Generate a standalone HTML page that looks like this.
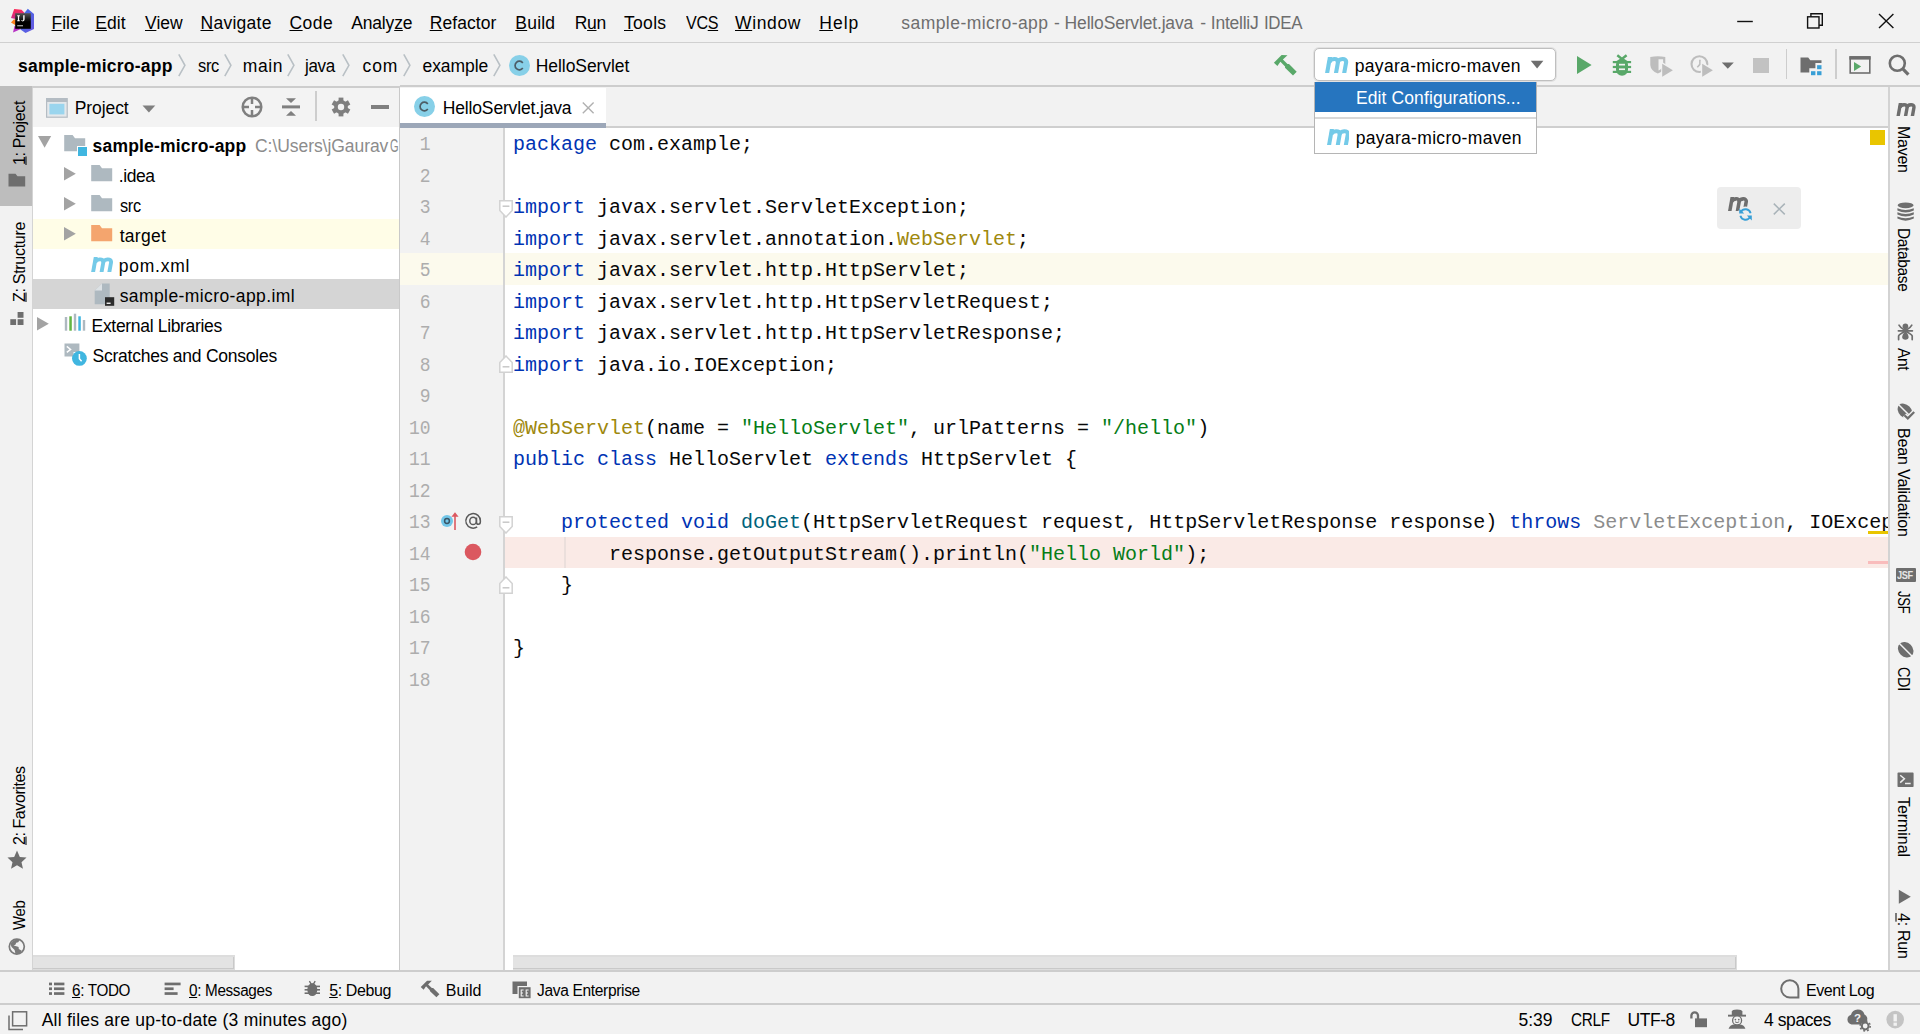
<!DOCTYPE html>
<html><head><meta charset="utf-8"><title>IntelliJ IDEA</title>
<style>
html,body{margin:0;padding:0;background:#f2f2f2;}
body{width:1920px;height:1034px;position:relative;overflow:hidden;background:#f2f2f2;font-family:"Liberation Sans",sans-serif;font-size:17.5px;color:#000;}
div,span,svg{position:absolute;}
span{white-space:pre;}
u{text-decoration:underline;text-underline-offset:1px;text-decoration-thickness:1px;}
.code span{position:static;}
.code div{left:0;height:32px;line-height:32px;white-space:pre;}
</style></head><body>
<div style="left:0px;top:0px;width:1920px;height:43px;background:#f2f2f2;"></div>
<div style="left:0px;top:42px;width:1920px;height:1px;background:#d0d0d0;"></div>
<span style="left:51.50px;top:10.80px;font-size:17.5px;line-height:24px;color:#000;letter-spacing:0.011px;"><u>F</u>ile</span>
<span style="left:95.20px;top:10.80px;font-size:17.5px;line-height:24px;color:#000;letter-spacing:0.102px;"><u>E</u>dit</span>
<span style="left:145.00px;top:10.80px;font-size:17.5px;line-height:24px;color:#000;letter-spacing:0.008px;"><u>V</u>iew</span>
<span style="left:200.50px;top:10.80px;font-size:17.5px;line-height:24px;color:#000;letter-spacing:0.266px;"><u>N</u>avigate</span>
<span style="left:289.50px;top:10.80px;font-size:17.5px;line-height:24px;color:#000;letter-spacing:0.466px;"><u>C</u>ode</span>
<span style="left:351.20px;top:10.80px;font-size:17.5px;line-height:24px;color:#000;letter-spacing:-0.154px;">Analy<u>z</u>e</span>
<span style="left:429.70px;top:10.80px;font-size:17.5px;line-height:24px;color:#000;letter-spacing:0.070px;"><u>R</u>efactor</span>
<span style="left:515.30px;top:10.80px;font-size:17.5px;line-height:24px;color:#000;letter-spacing:0.205px;"><u>B</u>uild</span>
<span style="left:574.80px;top:10.80px;font-size:17.5px;line-height:24px;color:#000;letter-spacing:-0.335px;">R<u>u</u>n</span>
<span style="left:624.00px;top:10.80px;font-size:17.5px;line-height:24px;color:#000;letter-spacing:0.299px;"><u>T</u>ools</span>
<span style="left:686.20px;top:10.80px;font-size:17.5px;line-height:24px;color:#000;letter-spacing:-0.350px;transform-origin:0 0;transform:scaleX(0.9188);">VC<u>S</u></span>
<span style="left:735.00px;top:10.80px;font-size:17.5px;line-height:24px;color:#000;letter-spacing:0.639px;"><u>W</u>indow</span>
<span style="left:819.30px;top:10.80px;font-size:17.5px;line-height:24px;color:#000;letter-spacing:0.980px;"><u>H</u>elp</span>
<span style="left:901.30px;top:10.80px;font-size:17.5px;line-height:24px;color:#6e6e6e;letter-spacing:0.446px;">sample-micro-app</span>
<span style="left:1054.00px;top:10.80px;font-size:17.5px;line-height:24px;color:#6e6e6e;letter-spacing:0.000px;">-</span>
<span style="left:1064.60px;top:10.80px;font-size:17.5px;line-height:24px;color:#6e6e6e;letter-spacing:-0.167px;">HelloServlet.java</span>
<span style="left:1200.30px;top:10.80px;font-size:17.5px;line-height:24px;color:#6e6e6e;letter-spacing:0.000px;">-</span>
<span style="left:1210.80px;top:10.80px;font-size:17.5px;line-height:24px;color:#6e6e6e;letter-spacing:-0.236px;">IntelliJ</span>
<span style="left:1264.03px;top:10.80px;font-size:17.5px;line-height:24px;color:#6e6e6e;letter-spacing:-0.350px;transform-origin:0 0;transform:scaleX(0.9662);">IDEA</span>
<svg style="left:1730px;top:8px;" width="180" height="28" viewBox="0 0 180 28"><g fill="none" stroke="#111" stroke-width="1.4"><path d="M7.2 13.5H22.8"/><rect x="77.6" y="8.8" width="11.4" height="11.2"/><path d="M80.9 8.8V5.8H92.3V17.2H89"/><path d="M149 6L163.4 20M163.4 6L149 20"/></g></svg>
<svg style="left:10px;top:8px;" width="26" height="26" viewBox="0 0 26 26"><defs><linearGradient id="lg1" x1="0" y1="0" x2="0" y2="1"><stop offset="0" stop-color="#fe2857"/><stop offset="1" stop-color="#c92d8c"/></linearGradient>
<linearGradient id="lg2" x1="0" y1="0" x2="1" y2="1"><stop offset="0" stop-color="#3a6ee8"/><stop offset="1" stop-color="#6b57e0"/></linearGradient>
<linearGradient id="lg3" x1="0" y1="0" x2="0" y2="1"><stop offset="0" stop-color="#555"/><stop offset=".55" stop-color="#000"/></linearGradient></defs>
<path d="M4.2 1L11.5 1.8L15 5.5L5.5 11L1 10Z" fill="url(#lg1)"/>
<path d="M1 14.5L4 11.2L6 12L6 17.5Z" fill="#fc801d"/>
<path d="M4.5 18L3 24.5L11 21Z" fill="#b631c4"/>
<path d="M17.8 0.8L24 6V21L15.5 25L10.5 21.5L14 5.5Z" fill="url(#lg2)"/>
<rect x="5.2" y="5.2" width="15.6" height="15.6" fill="url(#lg3)"/>
<path d="M7.2 7.2H9.8V8.2H9.1V12.3H9.8V13.3H7.2V12.3H7.9V8.2H7.2Z M13.2 7.2H14.6V11.6Q14.6 13.4 12.8 13.4Q11.7 13.4 11.1 12.6L11.8 11.9Q12.2 12.4 12.7 12.4Q13.2 12.4 13.2 11.5Z" fill="#fff"/>
<rect x="7.2" y="17.2" width="5.8" height="1.1" fill="#bbb"/></svg>
<div style="left:0px;top:44px;width:1920px;height:42px;background:#f2f2f2;"></div>
<div style="left:0px;top:86px;width:399.5px;height:2px;background:#cdcdcd;"></div>
<div style="left:399.5px;top:85px;width:1520.5px;height:2px;background:#cdcdcd;"></div>
<span style="left:18.00px;top:54.00px;font-size:17.5px;line-height:24px;color:#000;letter-spacing:0.250px;font-weight:bold;">sample-micro-app</span>
<span style="left:197.50px;top:54.00px;font-size:17.5px;line-height:24px;color:#000;letter-spacing:-0.350px;transform-origin:0 0;transform:scaleX(0.9398);">src</span>
<span style="left:242.80px;top:54.00px;font-size:17.5px;line-height:24px;color:#000;letter-spacing:0.601px;">main</span>
<span style="left:305.47px;top:54.00px;font-size:17.5px;line-height:24px;color:#000;letter-spacing:-0.350px;transform-origin:0 0;transform:scaleX(0.9746);">java</span>
<span style="left:362.50px;top:54.00px;font-size:17.5px;line-height:24px;color:#000;letter-spacing:0.909px;">com</span>
<span style="left:422.50px;top:54.00px;font-size:17.5px;line-height:24px;color:#000;letter-spacing:-0.069px;">example</span>
<span style="left:535.80px;top:54.00px;font-size:17.5px;line-height:24px;color:#000;letter-spacing:-0.071px;">HelloServlet</span>
<svg style="left:177.8px;top:54px;" width="8" height="23" viewBox="0 0 8 23"><path d="M0.8 0.4L6.9 11.3L0.8 22.2" fill="none" stroke="#b9c0c5" stroke-width="1.6"/></svg>
<svg style="left:224.3px;top:54px;" width="8" height="23" viewBox="0 0 8 23"><path d="M0.8 0.4L6.9 11.3L0.8 22.2" fill="none" stroke="#b9c0c5" stroke-width="1.6"/></svg>
<svg style="left:287.3px;top:54px;" width="8" height="23" viewBox="0 0 8 23"><path d="M0.8 0.4L6.9 11.3L0.8 22.2" fill="none" stroke="#b9c0c5" stroke-width="1.6"/></svg>
<svg style="left:342.3px;top:54px;" width="8" height="23" viewBox="0 0 8 23"><path d="M0.8 0.4L6.9 11.3L0.8 22.2" fill="none" stroke="#b9c0c5" stroke-width="1.6"/></svg>
<svg style="left:403.3px;top:54px;" width="8" height="23" viewBox="0 0 8 23"><path d="M0.8 0.4L6.9 11.3L0.8 22.2" fill="none" stroke="#b9c0c5" stroke-width="1.6"/></svg>
<svg style="left:493.3px;top:54px;" width="8" height="23" viewBox="0 0 8 23"><path d="M0.8 0.4L6.9 11.3L0.8 22.2" fill="none" stroke="#b9c0c5" stroke-width="1.6"/></svg>
<svg style="left:508.5px;top:54.5px;" width="21.0" height="21.0" viewBox="0 0 21.0 21.0"><circle cx="10.5" cy="10.5" r="10.5" fill="#87d0e8"/><path d="M13.8 7.9A4.3 4.3 0 1 0 13.8 13.1" fill="none" stroke="#4c5d66" stroke-width="1.7"/></svg>
<svg style="left:1273px;top:53px;" width="26" height="24" viewBox="0 0 26 24"><path d="M0.9 9.7L8.6 2L14.5 2.2L9.9 6.6L14.5 11H16L23.7 18.7L20 22.4L12 14.7L12.1 13.6L7.4 8.8L4.4 13Z" fill="#59a869"/></svg>
<div style="left:1314px;top:48px;width:241.5px;height:32.5px;background:#fff;border:1px solid #bfbfbf;border-radius:5px;box-sizing:border-box;box-shadow:0 0 0 1px rgba(185,185,185,0.3);"></div>
<svg style="left:1325.4px;top:56.99999999999999px;" width="23.199999999999818" height="15.6" viewBox="0 0 23.2 15.6"><g fill="none" stroke="#74cae8" stroke-width="4.1"><path d="M1.95 17L5.15 -1"/><path d="M4.3 5.6C5.2 1.4 13.8 0.4 12.9 5.6L10.85 17"/><path d="M12.6 5.6C13.5 1.4 22 0.4 21.1 5.6L19.05 17"/></g></svg>
<span style="left:1354.80px;top:53.70px;font-size:17.5px;line-height:24px;color:#000;letter-spacing:0.304px;">payara-micro-maven</span>
<svg style="left:1530px;top:60px;" width="15" height="10" viewBox="0 0 15 10"><path d="M0.8 0.8H13.4L7.1 8.6Z" fill="#6e6e6e"/></svg>
<svg style="left:1576px;top:55px;" width="17" height="20" viewBox="0 0 17 20"><path d="M1 1L15.6 10L1 19Z" fill="#59a869"/></svg>
<svg style="left:1611px;top:54px;" width="22" height="22" viewBox="0 0 22 22"><g fill="#59a869"><rect x="5" y="4.4" width="12" height="17.3" rx="6"/><rect x="1.8" y="7" width="18.3" height="2.2"/><rect x="1.8" y="11.9" width="18.3" height="2.2"/><rect x="1.8" y="16.8" width="18.3" height="2.2"/></g><path d="M6.3 1.3L10.95 5L15.6 1.3" fill="none" stroke="#59a869" stroke-width="2.4"/><rect x="8" y="9.8" width="6" height="1.7" fill="#f2f2f2"/><rect x="8" y="14.4" width="6" height="1.7" fill="#f2f2f2"/></svg>
<svg style="left:1649px;top:55px;" width="25" height="23" viewBox="0 0 25 23"><path d="M1.3 2Q8.8 0.4 16.3 2V10Q16 15.6 8.8 18.6Q1.6 15.6 1.3 10Z" fill="#bdbdbd"/><path d="M9.5 4.3H14.1V10Q13.8 13.4 9.5 15.6Z" fill="#f2f2f2"/><path d="M12.2 6.6L26 15.2L12.2 23.8Z" fill="#f2f2f2"/><path d="M13.2 8.7L23.9 15.2L13.2 21.7Z" fill="#bdbdbd"/></svg>
<svg style="left:1689px;top:55px;" width="25" height="23" viewBox="0 0 25 23"><circle cx="10.4" cy="9.1" r="7.9" fill="none" stroke="#bdbdbd" stroke-width="2.1"/><path d="M10.9 4.8V9.4L8.3 12.2" fill="none" stroke="#bdbdbd" stroke-width="1.6"/><path d="M11.8 6L26.6 15.2L11.8 24.4Z" fill="#f2f2f2"/><path d="M13.2 8.7L23.9 15.2L13.2 21.7Z" fill="#bdbdbd"/></svg>
<svg style="left:1721px;top:62px;" width="14" height="8" viewBox="0 0 14 8"><path d="M0.8 0.6H12.8L6.8 6.8Z" fill="#6e6e6e"/></svg>
<div style="left:1753px;top:57.5px;width:15.5px;height:15px;background:#c2c2c2;"></div>
<div style="left:1785.5px;top:49px;width:1.5px;height:29.5px;background:#cdcdcd;"></div>
<svg style="left:1800px;top:57px;" width="23" height="19" viewBox="0 0 23 19"><path d="M0.5 0.5H8.2L10.3 3.2H21.5V5.9H15.4V11.3H9.3V15.4H0.5Z" fill="#6e6e6e"/><rect x="17.1" y="8.2" width="4.4" height="4" fill="#389fd6"/><rect x="11" y="14.2" width="4.4" height="4" fill="#389fd6"/><rect x="17.1" y="14.2" width="4.4" height="4" fill="#389fd6"/></svg>
<div style="left:1835px;top:49px;width:1.5px;height:29.5px;background:#cdcdcd;"></div>
<svg style="left:1849px;top:56px;" width="22" height="18" viewBox="0 0 22 18"><rect x="1.2" y="1" width="19.6" height="16" fill="none" stroke="#6e6e6e" stroke-width="1.6"/><rect x="0.4" y="0.2" width="21.2" height="3.4" fill="#6e6e6e"/><path d="M5 6.1L12.2 10.5L5 14.9Z" fill="#59a869"/></svg>
<svg style="left:1888px;top:54px;" width="23" height="22" viewBox="0 0 23 22"><circle cx="9.3" cy="9.3" r="7.5" fill="none" stroke="#6e6e6e" stroke-width="2.6"/><path d="M14.6 14.6L20.4 20.6" stroke="#6e6e6e" stroke-width="3.2"/></svg>
<div style="left:0px;top:87.5px;width:32px;height:883px;background:#f2f2f2;"></div>
<div style="left:32px;top:87.5px;width:1px;height:883px;background:#d4d4d4;"></div>
<div style="left:0px;top:86px;width:32px;height:120px;background:#bdbdbd;"></div>
<span style="left:24.5px;top:164px;font-size:16px;line-height:24px;color:#000;letter-spacing:-0.349px;transform-origin:0 0;transform:rotate(-90deg) translate(-1.00px,-17.50px);"><u>1</u>: Project</span>
<svg style="left:8px;top:173px;" width="18" height="14" viewBox="0 0 18 14"><path d="M0.5 0.8H7.5L9.5 3.2H17.2V13.5H0.5Z" fill="#6e6e6e"/></svg>
<span style="left:24.5px;top:302.4px;font-size:16px;line-height:24px;color:#000;letter-spacing:-0.298px;transform-origin:0 0;transform:rotate(-90deg) translate(0.00px,-17.50px);"><u>Z</u>: Structure</span>
<svg style="left:10px;top:312px;" width="14" height="13.2" viewBox="0 0 14 13.2"><g fill="#6e6e6e"><rect x="7.6" y="0" width="5.9" height="5.8"/><rect x="0.3" y="7.2" width="5.8" height="5.8"/><rect x="7.6" y="7.2" width="5.9" height="5.8"/></g></svg>
<span style="left:24.5px;top:844.5px;font-size:16px;line-height:24px;color:#000;letter-spacing:-0.426px;transform-origin:0 0;transform:rotate(-90deg) translate(0.00px,-17.50px);"><u>2</u>: Favorites</span>
<svg style="left:6.6px;top:849.8px;" width="20" height="19.2" viewBox="0 0 19 18.3"><path d="M9.5 0.5L12.2 6.6L18.6 7.2L13.8 11.6L15.2 17.8L9.5 14.5L3.8 17.8L5.2 11.6L0.4 7.2L6.8 6.6Z" fill="#6e6e6e"/></svg>
<span style="left:24.5px;top:930.3px;font-size:16px;line-height:24px;color:#000;letter-spacing:-0.350px;transform-origin:0 0;transform:rotate(-90deg) translate(0.00px,-17.50px) scaleX(0.9309);">Web</span>
<svg style="left:8px;top:938px;" width="18" height="18" viewBox="0 0 18 18"><circle cx="8.8" cy="8.6" r="7.5" fill="none" stroke="#7a7a7a" stroke-width="1.7"/><path d="M2.4 6Q4.5 2.2 8.8 1.4L11.6 2.2L10.2 4.3L8.2 4.8L7.4 6.8L5.6 7.6L9.2 8.4L10.6 9L10.8 11L13.8 12.8Q12 16 8.8 16L7.4 15.4L6.6 12L3.6 9Z" fill="#7a7a7a"/></svg>
<div style="left:33px;top:87.5px;width:366px;height:40px;background:#f3f3f3;"></div>
<div style="left:33px;top:127px;width:366px;height:843.5px;background:#fff;"></div>
<div style="left:399px;top:87.5px;width:1px;height:883px;background:#c9c9c9;"></div>
<svg style="left:46px;top:98px;" width="22" height="20" viewBox="0 0 22 20"><rect x="0.6" y="0.6" width="20.6" height="18.6" fill="#e4e8eb" stroke="#b4bcc3" stroke-width="1.2"/><rect x="0.6" y="0.6" width="20.6" height="3.4" fill="#b4bcc3"/><rect x="3.4" y="5.8" width="15" height="10.6" fill="#9ad5ee"/></svg>
<span style="left:74.80px;top:95.80px;font-size:17.5px;line-height:24px;color:#000;letter-spacing:-0.101px;">Project</span>
<svg style="left:142px;top:105px;" width="14" height="8" viewBox="0 0 14 8"><path d="M0.5 0.4H13.3L6.9 7.4Z" fill="#7f7f7f"/></svg>
<svg style="left:240px;top:95px;" width="24" height="24" viewBox="0 0 24 24"><g fill="none" stroke="#7f7f7f" stroke-width="2.5"><circle cx="12" cy="12" r="9.3"/><path d="M2.5 12H9M15 12H21.5M12 2.5V9M12 15V21.5"/></g></svg>
<svg style="left:281px;top:97px;" width="20" height="20" viewBox="0 0 20 20"><g fill="#7f7f7f"><rect x="1" y="8.4" width="18" height="3"/><path d="M5 1.2H15L10 6Z"/><path d="M5 18.8H15L10 14Z"/></g></svg>
<div style="left:315.3px;top:91px;width:1.5px;height:29.8px;background:#cdcdcd;"></div>
<svg style="left:330px;top:96px;" width="22" height="22" viewBox="0 0 22 22"><g transform="translate(11 11)"><g fill="#7f7f7f"><rect x="-2.4" y="-9.4" width="4.8" height="6" transform="rotate(0)"/><rect x="-2.4" y="-9.4" width="4.8" height="6" transform="rotate(60)"/><rect x="-2.4" y="-9.4" width="4.8" height="6" transform="rotate(120)"/><rect x="-2.4" y="-9.4" width="4.8" height="6" transform="rotate(180)"/><rect x="-2.4" y="-9.4" width="4.8" height="6" transform="rotate(240)"/><rect x="-2.4" y="-9.4" width="4.8" height="6" transform="rotate(300)"/></g><circle r="6.9" fill="#7f7f7f"/><circle r="3.2" fill="#f3f3f3"/></g></svg>
<div style="left:371px;top:105.4px;width:18.2px;height:3.2px;background:#7f7f7f;"></div>
<div style="left:33px;top:219px;width:366px;height:30px;background:#fffde7;"></div>
<div style="left:33px;top:279px;width:366px;height:30px;background:#d5d5d5;"></div>
<svg style="left:37.6px;top:136px;" width="14" height="13" viewBox="0 0 14 13"><path d="M0 0H13.2L6.6 11.8Z" fill="#a3a3a3"/></svg>
<svg style="left:64.1px;top:135px;" width="22" height="17" viewBox="0 0 22 17"><path d="M0.2 0.1H8.6L11 3.3H21.2V16.3H0.2Z" fill="#aeb9c0"/></svg>
<div style="left:78px;top:147px;width:9px;height:9px;background:#40b6e0;outline:1.3px solid #fff;"></div>
<span style="left:92.60px;top:134.00px;font-size:17.5px;line-height:24px;color:#000;letter-spacing:0.190px;font-weight:bold;">sample-micro-app</span>
<span style="left:255.00px;top:134.00px;font-size:17.5px;line-height:24px;color:#8c8c8c;letter-spacing:-0.057px;">C:\Users\jGaurav</span>
<span style="left:389.60px;top:134.00px;font-size:17.5px;line-height:24px;color:#8c8c8c;letter-spacing:0.000px;transform-origin:0 0;transform:scaleX(0.6308);">G</span>
<svg style="left:64px;top:166.7px;" width="13" height="14" viewBox="0 0 13 14"><path d="M0 0L11.8 6.7L0 13.4Z" fill="#a3a3a3"/></svg>
<svg style="left:91.2px;top:165.0px;" width="22" height="17" viewBox="0 0 22 17"><path d="M0.2 0.1H8.6L11 3.3H21.2V16.3H0.2Z" fill="#aeb9c0"/></svg>
<span style="left:118.70px;top:164.00px;font-size:17.5px;line-height:24px;color:#000;letter-spacing:-0.404px;">.idea</span>
<svg style="left:64px;top:196.7px;" width="13" height="14" viewBox="0 0 13 14"><path d="M0 0L11.8 6.7L0 13.4Z" fill="#a3a3a3"/></svg>
<svg style="left:91.2px;top:195.0px;" width="22" height="17" viewBox="0 0 22 17"><path d="M0.2 0.1H8.6L11 3.3H21.2V16.3H0.2Z" fill="#aeb9c0"/></svg>
<span style="left:119.70px;top:194.00px;font-size:17.5px;line-height:24px;color:#000;letter-spacing:-0.350px;transform-origin:0 0;transform:scaleX(0.9310);">src</span>
<svg style="left:64px;top:226.7px;" width="13" height="14" viewBox="0 0 13 14"><path d="M0 0L11.8 6.7L0 13.4Z" fill="#a3a3a3"/></svg>
<svg style="left:91.2px;top:225.0px;" width="22" height="17" viewBox="0 0 22 17"><path d="M0.2 0.1H8.6L11 3.3H21.2V16.3H0.2Z" fill="#f4a56e"/></svg>
<span style="left:119.70px;top:224.00px;font-size:17.5px;line-height:24px;color:#000;letter-spacing:0.282px;">target</span>
<svg style="left:91.2px;top:256.79999999999995px;" width="22.0" height="15.6" viewBox="0 0 23.2 15.6"><g fill="none" stroke="#74cae8" stroke-width="4.1"><path d="M1.95 17L5.15 -1"/><path d="M4.3 5.6C5.2 1.4 13.8 0.4 12.9 5.6L10.85 17"/><path d="M12.6 5.6C13.5 1.4 22 0.4 21.1 5.6L19.05 17"/></g></svg>
<span style="left:118.70px;top:254.00px;font-size:17.5px;line-height:24px;color:#000;letter-spacing:0.778px;">pom.xml</span>
<svg style="left:94px;top:283px;" width="21" height="23" viewBox="0 0 21 23"><path d="M8 0.4H15.7V21.3H0.7V7.6Z" fill="#aeb9c0"/><path d="M8 0.4V7.6H0.7Z" fill="#dde2e5"/><rect x="11" y="14.2" width="9.2" height="8.6" fill="#2b2b2b"/><rect x="12.6" y="19.6" width="4" height="1.3" fill="#fff"/></svg>
<span style="left:119.70px;top:284.00px;font-size:17.5px;line-height:24px;color:#000;letter-spacing:0.407px;">sample-micro-app.iml</span>
<svg style="left:37px;top:316.7px;" width="13" height="14" viewBox="0 0 13 14"><path d="M0 0L11.8 6.7L0 13.4Z" fill="#a3a3a3"/></svg>
<svg style="left:64px;top:313px;" width="22" height="19" viewBox="0 0 22 19"><rect x="0.8" y="4" width="2.4" height="13.7" fill="#aeb9c0"/><rect x="5.3" y="3.3" width="2.5" height="14.4" fill="#62b543"/><rect x="9.8" y="0.7" width="2.4" height="17" fill="#aeb9c0"/><rect x="14.3" y="3.3" width="2.5" height="14.4" fill="#40b6e0"/><rect x="18.8" y="7" width="2.4" height="10.7" fill="#aeb9c0"/></svg>
<span style="left:91.60px;top:314.00px;font-size:17.5px;line-height:24px;color:#000;letter-spacing:-0.325px;">External Libraries</span>
<svg style="left:64px;top:343px;" width="24" height="24" viewBox="0 0 24 24"><path d="M0.5 0.6H15.4V9H9.5V13.5H0.5Z" fill="#aeb9c0"/><path d="M2.8 3.4L6.6 6.4L2.8 9.4" fill="none" stroke="#fff" stroke-width="1.4"/><circle cx="15.4" cy="15.4" r="7.4" fill="#40b6e0"/><path d="M15.4 11V15.8L17.6 18.2" fill="none" stroke="#fff" stroke-width="1.5"/></svg>
<span style="left:92.60px;top:344.00px;font-size:17.5px;line-height:24px;color:#000;letter-spacing:-0.245px;">Scratches and Consoles</span>
<div style="left:33px;top:955px;width:201.5px;height:15px;background:#dddddd;"></div>
<div style="left:33px;top:957px;width:200.5px;height:12px;background:#e3e3e3;border-right:1px solid #c9c9c9;border-bottom:1px solid #c9c9c9;box-sizing:border-box;"></div>
<div style="left:400px;top:87.5px;width:1488.5px;height:39px;background:#f2f2f2;"></div>
<div style="left:400px;top:126px;width:1488.5px;height:2px;background:#cfcfcf;"></div>
<div style="left:400px;top:87.5px;width:206px;height:36px;background:#fff;"></div>
<div style="left:400px;top:123px;width:206px;height:5px;background:#9ca7b8;"></div>
<svg style="left:414.3px;top:96.2px;" width="21.0" height="21.0" viewBox="0 0 21.0 21.0"><circle cx="10.5" cy="10.5" r="10.5" fill="#87d0e8"/><path d="M13.8 7.9A4.3 4.3 0 1 0 13.8 13.1" fill="none" stroke="#4c5d66" stroke-width="1.7"/></svg>
<span style="left:442.80px;top:95.80px;font-size:17.5px;line-height:24px;color:#000;letter-spacing:-0.161px;">HelloServlet.java</span>
<svg style="left:582px;top:102px;" width="13" height="12" viewBox="0 0 13 12"><path d="M0.8 0.6L11.6 11.2M11.6 0.6L0.8 11.2" stroke="#b0b0b0" stroke-width="1.4"/></svg>
<div style="left:400px;top:128px;width:103px;height:842.5px;background:#f2f2f2;"></div>
<div style="left:504.5px;top:128px;width:1384px;height:842.5px;background:#fff;"></div>
<div style="left:400px;top:253px;width:1488.5px;height:32px;background:#fcfaed;"></div>
<div style="left:504.5px;top:537px;width:1384px;height:31px;background:#faeae6;"></div>
<div style="left:564.2px;top:537px;width:1.8px;height:31px;background:#ebdfdc;"></div>
<div style="left:503px;top:128px;width:2px;height:842.5px;background:#d4d4d4;"></div>
<span style="left:380px;width:50.6px;text-align:right;top:132.5px;font-family:'Liberation Mono';font-size:20px;line-height:24px;color:#adadad;transform-origin:100% 50%;transform:scaleX(0.9);">1</span>
<span style="left:380px;width:50.6px;text-align:right;top:164.5px;font-family:'Liberation Mono';font-size:20px;line-height:24px;color:#adadad;transform-origin:100% 50%;transform:scaleX(0.9);">2</span>
<span style="left:380px;width:50.6px;text-align:right;top:195.5px;font-family:'Liberation Mono';font-size:20px;line-height:24px;color:#adadad;transform-origin:100% 50%;transform:scaleX(0.9);">3</span>
<span style="left:380px;width:50.6px;text-align:right;top:227.5px;font-family:'Liberation Mono';font-size:20px;line-height:24px;color:#adadad;transform-origin:100% 50%;transform:scaleX(0.9);">4</span>
<span style="left:380px;width:50.6px;text-align:right;top:258.5px;font-family:'Liberation Mono';font-size:20px;line-height:24px;color:#adadad;transform-origin:100% 50%;transform:scaleX(0.9);">5</span>
<span style="left:380px;width:50.6px;text-align:right;top:290.5px;font-family:'Liberation Mono';font-size:20px;line-height:24px;color:#adadad;transform-origin:100% 50%;transform:scaleX(0.9);">6</span>
<span style="left:380px;width:50.6px;text-align:right;top:321.5px;font-family:'Liberation Mono';font-size:20px;line-height:24px;color:#adadad;transform-origin:100% 50%;transform:scaleX(0.9);">7</span>
<span style="left:380px;width:50.6px;text-align:right;top:353.5px;font-family:'Liberation Mono';font-size:20px;line-height:24px;color:#adadad;transform-origin:100% 50%;transform:scaleX(0.9);">8</span>
<span style="left:380px;width:50.6px;text-align:right;top:384.5px;font-family:'Liberation Mono';font-size:20px;line-height:24px;color:#adadad;transform-origin:100% 50%;transform:scaleX(0.9);">9</span>
<span style="left:380px;width:50.6px;text-align:right;top:416.5px;font-family:'Liberation Mono';font-size:20px;line-height:24px;color:#adadad;transform-origin:100% 50%;transform:scaleX(0.9);">10</span>
<span style="left:380px;width:50.6px;text-align:right;top:447.5px;font-family:'Liberation Mono';font-size:20px;line-height:24px;color:#adadad;transform-origin:100% 50%;transform:scaleX(0.9);">11</span>
<span style="left:380px;width:50.6px;text-align:right;top:479.5px;font-family:'Liberation Mono';font-size:20px;line-height:24px;color:#adadad;transform-origin:100% 50%;transform:scaleX(0.9);">12</span>
<span style="left:380px;width:50.6px;text-align:right;top:510.5px;font-family:'Liberation Mono';font-size:20px;line-height:24px;color:#adadad;transform-origin:100% 50%;transform:scaleX(0.9);">13</span>
<span style="left:380px;width:50.6px;text-align:right;top:542.5px;font-family:'Liberation Mono';font-size:20px;line-height:24px;color:#adadad;transform-origin:100% 50%;transform:scaleX(0.9);">14</span>
<span style="left:380px;width:50.6px;text-align:right;top:573.5px;font-family:'Liberation Mono';font-size:20px;line-height:24px;color:#adadad;transform-origin:100% 50%;transform:scaleX(0.9);">15</span>
<span style="left:380px;width:50.6px;text-align:right;top:605.5px;font-family:'Liberation Mono';font-size:20px;line-height:24px;color:#adadad;transform-origin:100% 50%;transform:scaleX(0.9);">16</span>
<span style="left:380px;width:50.6px;text-align:right;top:636.5px;font-family:'Liberation Mono';font-size:20px;line-height:24px;color:#adadad;transform-origin:100% 50%;transform:scaleX(0.9);">17</span>
<span style="left:380px;width:50.6px;text-align:right;top:668.5px;font-family:'Liberation Mono';font-size:20px;line-height:24px;color:#adadad;transform-origin:100% 50%;transform:scaleX(0.9);">18</span>
<div class="code" style="left:513px;top:128px;width:1375px;height:842px;overflow:hidden;font-family:'Liberation Mono';font-size:20px;color:#080808;"><div style="top:0.5px"><span style="color:#0033b3">package</span> com.example;</div><div style="top:63.5px"><span style="color:#0033b3">import</span> javax.servlet.ServletException;</div><div style="top:95.5px"><span style="color:#0033b3">import</span> javax.servlet.annotation.<span style="color:#9e880d">WebServlet</span>;</div><div style="top:126.5px"><span style="color:#0033b3">import</span> javax.servlet.http.HttpServlet;</div><div style="top:158.5px"><span style="color:#0033b3">import</span> javax.servlet.http.HttpServletRequest;</div><div style="top:189.5px"><span style="color:#0033b3">import</span> javax.servlet.http.HttpServletResponse;</div><div style="top:221.5px"><span style="color:#0033b3">import</span> java.io.IOException;</div><div style="top:284.5px"><span style="color:#9e880d">@WebServlet</span>(name = <span style="color:#067d17">"HelloServlet"</span>, urlPatterns = <span style="color:#067d17">"/hello"</span>)</div><div style="top:315.5px"><span style="color:#0033b3">public class</span> HelloServlet <span style="color:#0033b3">extends</span> HttpServlet {</div><div style="top:378.5px">    <span style="color:#0033b3">protected void</span> <span style="color:#00627a">doGet</span>(HttpServletRequest request, HttpServletResponse response) <span style="color:#0033b3">throws</span> <span style="color:#8c8c8c">ServletException</span>, IOException {</div><div style="top:410.5px">        response.getOutputStream().println(<span style="color:#067d17">"Hello World"</span>);</div><div style="top:441.5px">    }</div><div style="top:504.5px">}</div></div>
<svg style="left:498.5px;top:200px;" width="14" height="18" viewBox="0 0 14 18"><path d="M0.8 0.8H13.2V10.4L7 17L0.8 10.4Z" fill="#fff" stroke="#d2d2d2" stroke-width="1.5"/><path d="M3.6 6.2H10.4" stroke="#c8c8c8" stroke-width="1.5"/></svg>
<svg style="left:498.5px;top:355px;" width="14" height="18" viewBox="0 0 14 18"><path d="M0.8 17.2H13.2V7.6L7 1L0.8 7.6Z" fill="#fff" stroke="#d2d2d2" stroke-width="1.5"/><path d="M3.6 11.8H10.4" stroke="#c8c8c8" stroke-width="1.5"/></svg>
<svg style="left:498.5px;top:516px;" width="14" height="18" viewBox="0 0 14 18"><path d="M0.8 0.8H13.2V10.4L7 17L0.8 10.4Z" fill="#fff" stroke="#d2d2d2" stroke-width="1.5"/><path d="M3.6 6.2H10.4" stroke="#c8c8c8" stroke-width="1.5"/></svg>
<svg style="left:498.5px;top:575.5px;" width="14" height="18" viewBox="0 0 14 18"><path d="M0.8 17.2H13.2V7.6L7 1L0.8 7.6Z" fill="#fff" stroke="#d2d2d2" stroke-width="1.5"/><path d="M3.6 11.8H10.4" stroke="#c8c8c8" stroke-width="1.5"/></svg>
<svg style="left:440px;top:511px;" width="20" height="20" viewBox="0 0 20 20"><circle cx="7" cy="10" r="6" fill="#72c6e8"/><circle cx="7" cy="10" r="2.4" fill="none" stroke="#3a5566" stroke-width="1.5"/><path d="M15 19V4" fill="none" stroke="#db5860" stroke-width="1.6"/><path d="M15 1.2L18.6 5.8H11.4Z" fill="#db5860"/></svg>
<svg style="left:464px;top:512px;" width="18" height="18" viewBox="0 0 18 18"><g fill="none" stroke="#5a5a5a" stroke-width="1.5"><path d="M13.2 14.9A7.3 7.3 0 1 1 16.4 9.2Q16.4 12.3 14.4 12.3Q12.5 12.3 12.5 10.2V5.4"/><ellipse cx="9.1" cy="8.9" rx="3.3" ry="3.6"/></g></svg>
<svg style="left:464px;top:543px;" width="18" height="18" viewBox="0 0 18 18"><circle cx="9" cy="9" r="8.3" fill="#db5860"/></svg>
<div style="left:1870px;top:130px;width:15px;height:14.5px;background:#e9c500;"></div>
<div style="left:1868px;top:530.7px;width:20px;height:3px;background:#e9c500;"></div>
<div style="left:1868px;top:561.2px;width:20px;height:2.8px;background:#f9bcbc;"></div>
<div style="left:1717.3px;top:187px;width:83.7px;height:42px;background:#ededed;border-radius:4px;"></div>
<svg style="left:1728px;top:197.3px;" width="20" height="13.6" viewBox="0 0 23.2 15.6"><g fill="none" stroke="#6e6e6e" stroke-width="4.1"><path d="M1.95 17L5.15 -1"/><path d="M4.3 5.6C5.2 1.4 13.8 0.4 12.9 5.6L10.85 17"/><path d="M12.6 5.6C13.5 1.4 22 0.4 21.1 5.6L19.05 17"/></g></svg>
<svg style="left:1737px;top:205.5px;" width="17" height="17" viewBox="0 0 17 17"><circle cx="8.5" cy="8.5" r="8" fill="#ededed"/><path d="M13.6 7.2A5.3 5.3 0 0 0 3.9 5.9M3.4 9.8A5.3 5.3 0 0 0 13.1 11.1" fill="none" stroke="#389fd6" stroke-width="1.9"/><path d="M2.2 2.4V7.4H7.2Z M14.8 14.6V9.6H9.8Z" fill="#389fd6"/></svg>
<svg style="left:1773px;top:203px;" width="13" height="12" viewBox="0 0 13 12"><path d="M0.8 0.6L11.8 11.4M11.8 0.6L0.8 11.4" stroke="#a9b3b9" stroke-width="1.5"/></svg>
<div style="left:513px;top:955px;width:1224px;height:15px;background:#dddddd;"></div>
<div style="left:513px;top:957px;width:1223px;height:12px;background:#e3e3e3;border-right:1px solid #c9c9c9;border-bottom:1px solid #c9c9c9;box-sizing:border-box;"></div>
<div style="left:1314px;top:81.5px;width:222.8px;height:72.5px;background:#fff;border:1px solid #b5b5b5;border-top:none;box-sizing:border-box;"></div>
<div style="left:1315px;top:82px;width:220.8px;height:29.8px;background:#2675bf;"></div>
<span style="left:1356.00px;top:85.80px;font-size:17.5px;line-height:24px;color:#fff;letter-spacing:0.101px;">Edit Configurations...</span>
<div style="left:1315px;top:117px;width:220.8px;height:2px;background:#d8d8d8;"></div>
<svg style="left:1326.6px;top:129.20000000000002px;" width="22.800000000000182" height="15.6" viewBox="0 0 23.2 15.6"><g fill="none" stroke="#74cae8" stroke-width="4.1"><path d="M1.95 17L5.15 -1"/><path d="M4.3 5.6C5.2 1.4 13.8 0.4 12.9 5.6L10.85 17"/><path d="M12.6 5.6C13.5 1.4 22 0.4 21.1 5.6L19.05 17"/></g></svg>
<span style="left:1355.70px;top:125.80px;font-size:17.5px;line-height:24px;color:#000;letter-spacing:0.316px;">payara-micro-maven</span>
<div style="left:1890px;top:87px;width:30px;height:884px;background:#f2f2f2;"></div>
<div style="left:1888px;top:87px;width:2px;height:884px;background:#d3d3d3;"></div>
<svg style="left:1896px;top:103px;" width="20" height="13" viewBox="0 0 23.2 15.6"><g fill="none" stroke="#6e6e6e" stroke-width="4.1"><path d="M1.95 17L5.15 -1"/><path d="M4.3 5.6C5.2 1.4 13.8 0.4 12.9 5.6L10.85 17"/><path d="M12.6 5.6C13.5 1.4 22 0.4 21.1 5.6L19.05 17"/></g></svg>
<span style="left:1897px;top:127px;font-size:16px;line-height:24px;color:#000;letter-spacing:-0.281px;transform-origin:0 0;transform:rotate(90deg) translate(-1.00px,-17.50px);">Maven</span>
<svg style="left:1896px;top:201px;" width="20" height="20" viewBox="0 0 20 20"><g fill="#6e6e6e"><ellipse cx="9.6" cy="4.3" rx="8" ry="2.9"/><path d="M1.4 7.2Q9.6 10.8 17.8 7.2V9.4Q9.6 13.600000000000001 1.4 9.4Z"/><path d="M1.4 11.3Q9.6 14.9 17.8 11.3V13.5Q9.6 17.700000000000003 1.4 13.5Z"/><path d="M1.4 15.4Q9.6 19.0 17.8 15.4V17.6Q9.6 21.8 1.4 17.6Z"/></g></svg>
<span style="left:1897px;top:228.6px;font-size:16px;line-height:24px;color:#000;letter-spacing:-0.350px;transform-origin:0 0;transform:rotate(90deg) translate(-0.97px,-17.50px) scaleX(0.9656);">Database</span>
<svg style="left:1896px;top:322px;" width="19" height="19" viewBox="0 0 19 19"><g fill="#6e6e6e"><circle cx="9.4" cy="4.2" r="2.8"/><ellipse cx="9.4" cy="8.8" rx="2" ry="2"/><path d="M9.4 9.5C6.5 12 5.2 15.5 7 17Q9.4 18.6 11.8 17C13.6 15.5 12.3 12 9.4 9.5Z"/></g><g stroke="#6e6e6e" stroke-width="1.7" fill="none" stroke-linecap="round"><path d="M3 3.2Q4.8 6.4 8 7.6M15.8 3.2Q14 6.4 10.8 7.6M2.4 8.8H16.4M8 10Q3 12.5 2.6 14V17.6M10.8 10Q15.8 12.5 16.2 14V17.6"/></g></svg>
<span style="left:1897px;top:348.4px;font-size:16px;line-height:24px;color:#000;letter-spacing:-0.350px;transform-origin:0 0;transform:rotate(90deg) translate(0.00px,-17.50px) scaleX(0.9719);">Ant</span>
<svg style="left:1896px;top:402px;" width="20" height="20" viewBox="0 0 20 20"><g transform="rotate(45 9 9)"><ellipse cx="9" cy="9" rx="8.4" ry="6.2" fill="#6e6e6e"/><path d="M-1 9H19" stroke="#f2f2f2" stroke-width="1.5"/></g><path d="M8.4 13.2L11.8 16.4L18.2 10" fill="none" stroke="#f2f2f2" stroke-width="5"/><path d="M8.4 13.2L11.8 16.4L18.2 10" fill="none" stroke="#6e6e6e" stroke-width="2.2"/></svg>
<span style="left:1897px;top:429px;font-size:16px;line-height:24px;color:#000;letter-spacing:-0.143px;transform-origin:0 0;transform:rotate(90deg) translate(-1.00px,-17.50px);">Bean Validation</span>
<div style="left:1896px;top:568.4px;width:19.6px;height:13.2px;background:#6e6e6e;border-radius:1px;"></div>
<span style="left:1897.20px;top:562.90px;font-size:10.7px;line-height:24px;color:#e6e6e6;letter-spacing:-0.350px;font-weight:bold;transform-origin:0 0;transform:scaleX(0.8569);">JSF</span>
<span style="left:1897px;top:590.8px;font-size:16px;line-height:24px;color:#000;letter-spacing:-0.350px;transform-origin:0 0;transform:rotate(90deg) translate(0.00px,-17.50px) scaleX(0.8187);">JSF</span>
<svg style="left:1896px;top:640px;" width="20" height="20" viewBox="0 0 20 20"><g transform="rotate(45 9.7 9.8)"><ellipse cx="9.7" cy="9.8" rx="8.5" ry="7" fill="#6e6e6e"/><path d="M-1 9.8H21" stroke="#f2f2f2" stroke-width="1.5"/></g></svg>
<span style="left:1897px;top:667px;font-size:16px;line-height:24px;color:#000;letter-spacing:-0.350px;transform-origin:0 0;transform:rotate(90deg) translate(0.00px,-17.50px) scaleX(0.9012);">CDI</span>
<svg style="left:1897px;top:772px;" width="17" height="16" viewBox="0 0 17 16"><rect x="0.5" y="0.6" width="16.1" height="14.4" rx="0.8" fill="#6e6e6e"/><path d="M3.2 3.2L7.4 6.8L3.2 10.6M8 11.6H13.7" fill="none" stroke="#ececec" stroke-width="1.5"/></svg>
<span style="left:1897px;top:797.2px;font-size:16px;line-height:24px;color:#000;letter-spacing:-0.058px;transform-origin:0 0;transform:rotate(90deg) translate(0.00px,-17.50px);">Terminal</span>
<svg style="left:1898px;top:889px;" width="14" height="16" viewBox="0 0 14 16"><path d="M0.8 0.8L12.8 7.8L0.8 14.8Z" fill="#6e6e6e"/></svg>
<span style="left:1897px;top:913.2px;font-size:16px;line-height:24px;color:#000;letter-spacing:-0.248px;transform-origin:0 0;transform:rotate(90deg) translate(0.00px,-17.50px);"><u>4</u>: Run</span>
<div style="left:0px;top:970px;width:1920px;height:2px;background:#cdcdcd;"></div>
<div style="left:0px;top:972px;width:1920px;height:31px;background:#f2f2f2;"></div>
<div style="left:0px;top:1003px;width:1920px;height:2px;background:#cdcdcd;"></div>
<svg style="left:49px;top:982px;" width="16" height="13" viewBox="0 0 16 13"><g fill="#6e6e6e"><rect x="0" y="0.6" width="3" height="2.7"/><rect x="0" y="5.4" width="3" height="2.7"/><rect x="0" y="10.2" width="3" height="2.7"/><rect x="5" y="0.6" width="10.4" height="2.7"/><rect x="5" y="5.4" width="10.4" height="2.7"/><rect x="5" y="10.2" width="10.4" height="2.7"/></g></svg>
<span style="left:72.30px;top:979.10px;font-size:16px;line-height:24px;color:#000;letter-spacing:-0.350px;transform-origin:0 0;transform:scaleX(0.9530);"><u>6</u>: TODO</span>
<svg style="left:164px;top:982px;" width="17" height="13" viewBox="0 0 17 13"><g fill="#6e6e6e"><rect x="0.6" y="0.6" width="16" height="2.7"/><rect x="0.6" y="5.4" width="9" height="2.7"/><rect x="0.6" y="10.2" width="13" height="2.7"/></g></svg>
<span style="left:189.20px;top:979.10px;font-size:16px;line-height:24px;color:#000;letter-spacing:-0.350px;transform-origin:0 0;transform:scaleX(0.9552);"><u>0</u>: Messages</span>
<svg style="left:304px;top:980px;" width="17" height="17" viewBox="0 0 17 17"><g fill="#6e6e6e"><ellipse cx="8.3" cy="9.6" rx="5" ry="6.4"/><path d="M4.8 1.6L6 0.8L7.6 3.4H9L10.6 0.8L11.8 1.6L10 4.4H6.6Z"/><rect x="0.6" y="5.6" width="15.4" height="1.6"/><rect x="0.6" y="9" width="15.4" height="1.6"/><rect x="0.6" y="12.4" width="15.4" height="1.6"/></g></svg>
<span style="left:329.20px;top:979.10px;font-size:16px;line-height:24px;color:#000;letter-spacing:-0.377px;"><u>5</u>: Debug</span>
<svg style="left:419.5px;top:979.2px;" width="21.3" height="19.7" viewBox="0 0 26 24"><path d="M0.9 9.7L8.6 2L14.5 2.2L9.9 6.6L14.5 11H16L23.7 18.7L20 22.4L12 14.7L12.1 13.6L7.4 8.8L4.4 13Z" fill="#6e6e6e"/></svg>
<span style="left:445.70px;top:979.10px;font-size:16px;line-height:24px;color:#000;letter-spacing:0.055px;">Build</span>
<svg style="left:512px;top:981px;" width="19" height="18" viewBox="0 0 19 18"><path d="M0.5 0.5H15V5H5.5V13H0.5Z" fill="#6e6e6e"/><rect x="6.8" y="6.2" width="11.8" height="11" fill="#6e6e6e"/><path d="M11.6 9H9.2V15H11.6M9.2 12H11M16.6 9H14.2V15H16.6M14.2 12H16" fill="none" stroke="#f2f2f2" stroke-width="1.1"/></svg>
<span style="left:537.30px;top:979.10px;font-size:16px;line-height:24px;color:#000;letter-spacing:-0.350px;transform-origin:0 0;transform:scaleX(0.9712);">Java Enterprise</span>
<svg style="left:1780px;top:979px;" width="20" height="20" viewBox="0 0 20 20"><path d="M18.4 18.4H9.8A8.6 8.6 0 1 1 18.4 9.8Z" fill="none" stroke="#6e6e6e" stroke-width="2"/></svg>
<span style="left:1806.00px;top:979.10px;font-size:16px;line-height:24px;color:#000;letter-spacing:-0.432px;">Event Log</span>
<div style="left:0px;top:1005px;width:1920px;height:29px;background:#f2f2f2;"></div>
<svg style="left:8px;top:1010.6px;" width="20" height="20" viewBox="0 0 20 20"><g fill="none" stroke="#6e6e6e" stroke-width="1.5"><rect x="4.6" y="0.8" width="14" height="14"/><path d="M1 4.4V18.4H15"/></g></svg>
<span style="left:41.70px;top:1008.20px;font-size:17.5px;line-height:24px;color:#000;letter-spacing:0.230px;">All files are up-to-date (3 minutes ago)</span>
<span style="left:1518.60px;top:1008.20px;font-size:17.5px;line-height:24px;color:#000;letter-spacing:-0.042px;">5:39</span>
<span style="left:1571.00px;top:1008.20px;font-size:17.5px;line-height:24px;color:#000;letter-spacing:-0.350px;transform-origin:0 0;transform:scaleX(0.8736);">CRLF</span>
<span style="left:1627.60px;top:1008.20px;font-size:17.5px;line-height:24px;color:#000;letter-spacing:-0.461px;">UTF-8</span>
<svg style="left:1690px;top:1010px;" width="18" height="19" viewBox="0 0 18 19"><rect x="5" y="8.4" width="12" height="8.8" fill="#6e6e6e"/><path d="M8 9V5.6A3.3 3.3 0 0 0 1.4 5.6V8.6" fill="none" stroke="#6e6e6e" stroke-width="2.3"/></svg>
<svg style="left:1727px;top:1009px;" width="20" height="21" viewBox="0 0 20 21"><g fill="#6e6e6e"><rect x="1" y="5.7" width="18" height="1.9"/><path d="M4.8 6V2.6Q5 0.6 10 0.5Q15 0.6 15.4 2.6V6Z"/><path d="M1.6 19.8Q3 16.2 6.5 15.6H13.5Q17 16.2 18.4 19.8Z"/></g><circle cx="10.1" cy="11.4" r="4.5" fill="#f2f2f2" stroke="#6e6e6e" stroke-width="1.3"/><circle cx="8.4" cy="10.6" r="0.85" fill="#6e6e6e"/><circle cx="11.8" cy="10.6" r="0.85" fill="#6e6e6e"/><path d="M8 12.8Q10.1 14.4 12.2 12.8" fill="none" stroke="#6e6e6e" stroke-width="1"/></svg>
<span style="left:1764.00px;top:1008.20px;font-size:17.5px;line-height:24px;color:#000;letter-spacing:-0.413px;">4 spaces</span>
<svg style="left:1846px;top:1009px;" width="26" height="23" viewBox="0 0 26 23"><path d="M5.5 15.5A5 5 0 0 1 5 5.8A7 7 0 0 1 18.5 5.5A4.8 4.8 0 0 1 20.5 12.5L14 15.5Z" fill="#6e6e6e"/><text x="8" y="13.2" font-family="Liberation Sans" font-weight="bold" font-size="11.5" fill="#f2f2f2">?</text><circle cx="19.2" cy="17" r="3.4" fill="none" stroke="#6e6e6e" stroke-width="2"/><circle cx="19.2" cy="17" r="5" fill="none" stroke="#6e6e6e" stroke-width="1.6" stroke-dasharray="1.9 2"/></svg>
<svg style="left:1886px;top:1010px;" width="19" height="19" viewBox="0 0 19 19"><circle cx="9.2" cy="9.6" r="8.8" fill="#c4c4c4"/><rect x="7.5" y="4.2" width="3.4" height="7.2" fill="#f2f2f2"/><rect x="7.5" y="12.6" width="3.4" height="3.2" fill="#f2f2f2"/></svg>
</body></html>
